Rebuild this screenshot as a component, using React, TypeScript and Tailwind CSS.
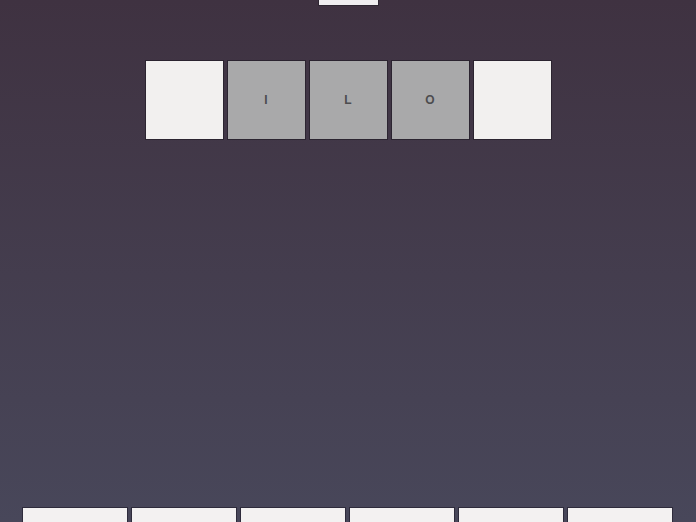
const letters = ['', 'I', 'L', 'O', ''];

function Tile({ letter }: { letter: string }) {
  const filled = letter !== '';
  return (
    <div
      className={`w-[77px] h-[78px] flex items-center justify-center text-[12px] font-bold text-[#4d4d4f] shadow-[0_0_0_1px_rgba(30,25,35,0.6)] ${
        filled ? 'bg-[#a9a9aa]' : 'bg-[#f2f0ef]'
      }`}
    >
      {letter}
    </div>
  );
}

export default function App() {
  return (
    <div
      className="w-[696px] h-[522px] overflow-hidden flex flex-col items-center bg-gradient-to-b from-[#3f3241] to-[#48475a]"
      style={{ fontFamily: '"Liberation Sans", Arial, sans-serif' }}
    >
      <div className="w-[59px] h-[5px] bg-[#f0eef0] shadow-[0_0_0_1px_rgba(30,25,35,0.5)]" />

      <div className="mt-[56px] flex gap-[5px]">
        {letters.map((l, i) => (
          <Tile key={i} letter={l} />
        ))}
      </div>

      <div className="flex-1" />

      <div className="flex gap-[5px] -mb-[90px] ml-[-1px]">
        {Array.from({ length: 6 }).map((_, i) => (
          <div
            key={i}
            className="w-[104px] h-[104px] bg-[#f3f1f1] shadow-[0_0_0_1px_rgba(30,25,40,0.6)]"
          />
        ))}
      </div>
    </div>
  );
}
